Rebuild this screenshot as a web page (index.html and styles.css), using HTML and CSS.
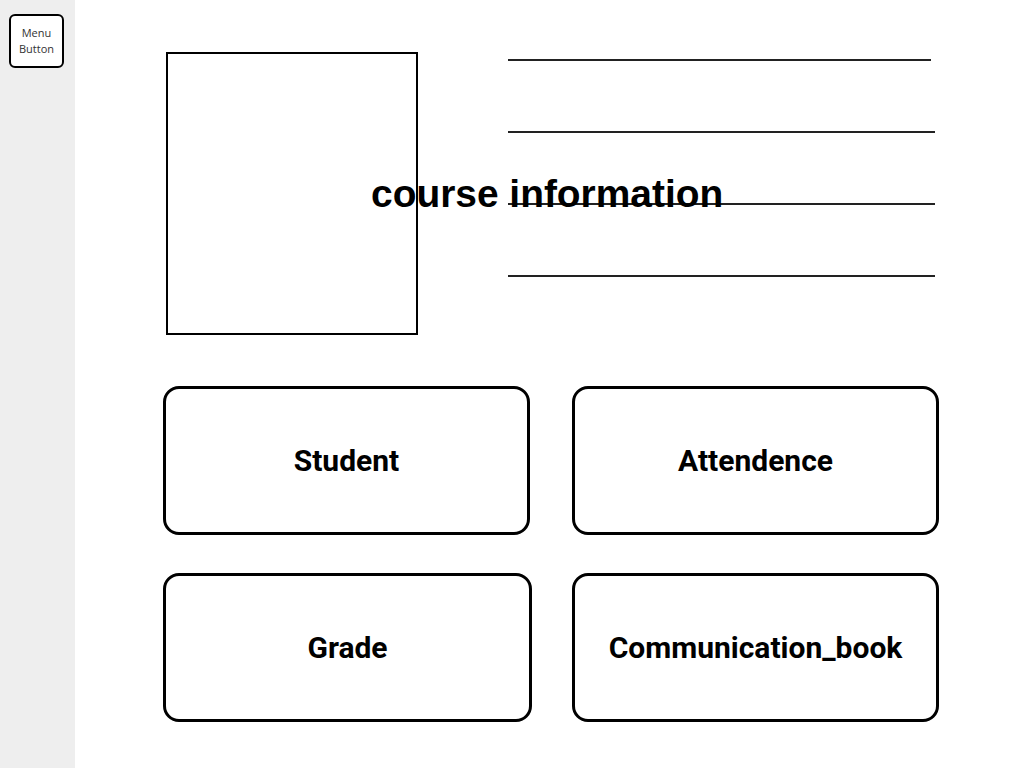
FILE: index.html
```html
<!DOCTYPE html>
<html lang="en">
<head>
  <meta charset="UTF-8">
  <title>Course</title>
  <link rel="stylesheet" href="styles.css">
</head>
<body>

  <aside class="sidebar">
    <button class="menu-btn">Menu<br>Button</button>
  </aside>

  <main class="main">
    <section class="course">
      <div class="photo"></div>
      <div class="info-lines">
        <div class="line line-short"></div>
        <div class="line"></div>
        <div class="line"></div>
        <div class="line"></div>
      </div>
      <h1 class="course-title">course information</h1>
    </section>

    <section class="actions">
      <button class="action action-narrow">Student</button>
      <button class="action">Attendence</button>
      <button class="action">Grade</button>
      <button class="action">Communication_book</button>
    </section>
  </main>

</body>
</html>
```

FILE: styles.css
```css
html, body {
  height: 100%;
}

body {
  margin: 0;
  display: flex;
  background-color: #fff;
  font-family: Roboto, "Liberation Sans", sans-serif;
}

.sidebar {
  width: 75px;
  flex-shrink: 0;
  background-color: #eeeeee;
  padding: 14px 0 0 9px;
  box-sizing: border-box;
}

.menu-btn {
  width: 55px;
  height: 54px;
  padding: 0;
  background-color: #fff;
  border: 2px solid #000;
  border-radius: 6px;
  font-family: "Open Sans", sans-serif;
  font-size: 11px;
  line-height: 16px;
  color: #333;
}

.main {
  flex: 1;
  padding: 52px 0 0 88px;
}

.course {
  position: relative;
  display: flex;
}

.photo {
  width: 248px;
  height: 279px;
  margin-left: 3px;
  border: 2px solid #000;
}

.info-lines {
  margin-left: 90px;
  padding-top: 7px;
  display: flex;
  flex-direction: column;
  gap: 70px;
}

.line {
  width: 427px;
  height: 2px;
  background-color: #222;
}

.line-short {
  width: 423px;
}

.course-title {
  position: absolute;
  top: 120px;
  left: 208px;
  margin: 0;
  font-family: "Liberation Sans", Arial, sans-serif;
  font-size: 38.9px;
  font-weight: bold;
  color: #000;
  white-space: nowrap;
}

.actions {
  margin-top: 51px;
  display: grid;
  grid-template-columns: 369px 367px;
  grid-auto-rows: 149px;
  column-gap: 40px;
  row-gap: 38px;
}

.action {
  background-color: #fff;
  border: 3px solid #000;
  border-radius: 16px;
  font-family: Roboto, sans-serif;
  font-size: 30px;
  font-weight: bold;
  color: #000;
  cursor: pointer;
}

.action-narrow {
  width: 367px;
}
```
